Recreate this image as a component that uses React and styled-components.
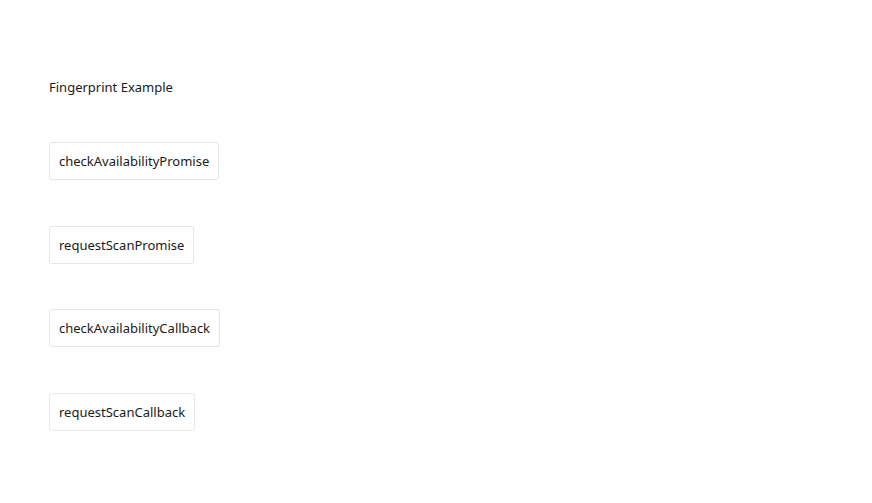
import React from "react"
import styled, { createGlobalStyle } from "styled-components"

const GlobalStyle = createGlobalStyle`
  body {
    margin: 0;
    background: #ffffff;
    font-family: "Noto Sans", "Open Sans", sans-serif;
    color: #1b1b1b;
  }
`

const Page = styled.main`
  display: flex;
  flex-direction: column;
  align-items: flex-start;
  padding: 77px 0 0 49px;
  gap: 45px;
`

const Title = styled.p`
  margin: 0;
  font-size: 13px;
  line-height: 20px;
`

const Actions = styled.div`
  display: flex;
  flex-direction: column;
  align-items: flex-start;
  gap: 45.7px;
`

const ActionButton = styled.button`
  height: 38px;
  padding: 0 9px;
  background: #ffffff;
  border: 1px solid #e6e6e6;
  border-radius: 3px;
  font-family: inherit;
  font-size: 13px;
  color: #1b1b1b;
  cursor: pointer;
`

const actions = [
  "checkAvailabilityPromise",
  "requestScanPromise",
  "checkAvailabilityCallback",
  "requestScanCallback",
]

const App = () => {
  return (
    <>
      <GlobalStyle />
      <Page>
        <Title>Fingerprint Example</Title>
        <Actions>
          {actions.map(name => (
            <ActionButton key={name}>{name}</ActionButton>
          ))}
        </Actions>
      </Page>
    </>
  )
}

export default App
